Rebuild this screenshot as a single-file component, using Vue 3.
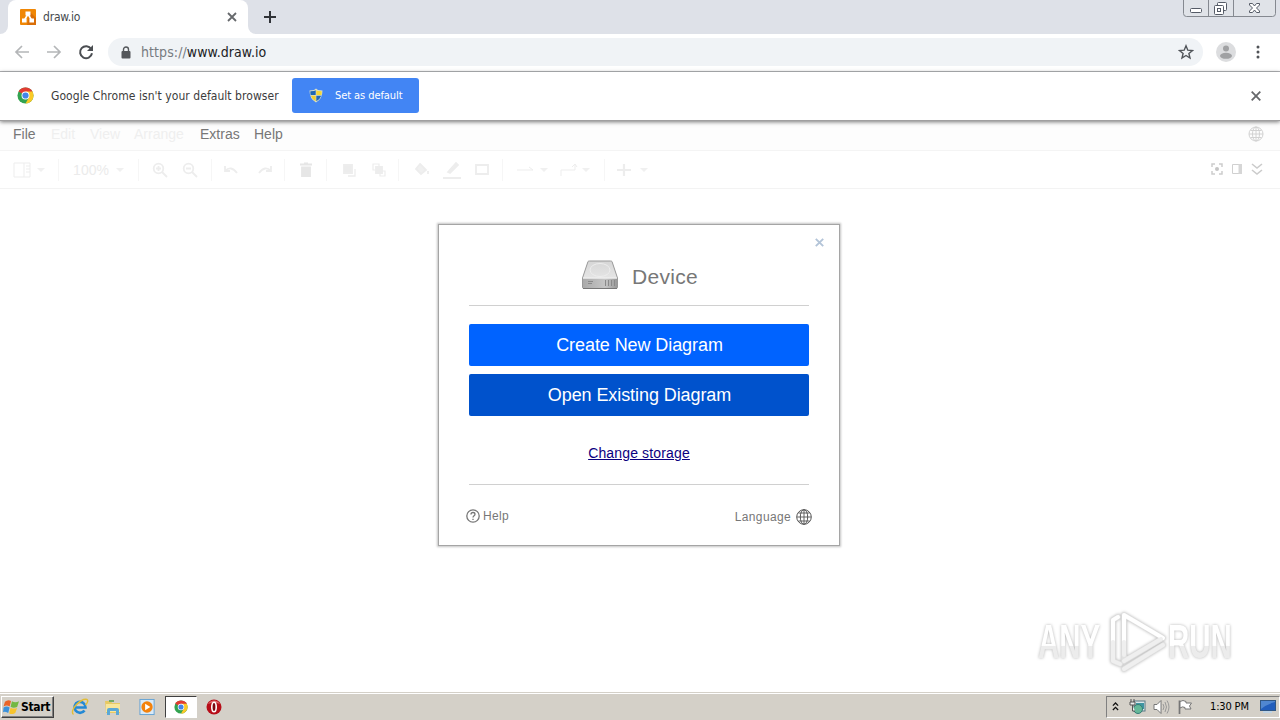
<script setup>
const raw = [
  ['panel', 22, 20], ['caret', 41, 8], ['sep', 58, 2], ['zoomtext', 91, 38], ['caret', 120, 8], ['sep', 138, 2],
  ['zin', 160, 18], ['zout', 190, 18], ['sep', 211, 2], ['undo', 231, 18], ['redo', 265, 18], ['sep', 284, 2],
  ['trash', 306, 18], ['sep', 326, 2], ['front', 349, 18], ['back', 379, 18], ['sep', 398, 2],
  ['fill', 422, 18], ['pen', 452, 20], ['shape', 482, 18], ['sep', 502, 2],
  ['conn', 525, 18], ['caret', 544, 8], ['way', 569, 18], ['caret', 586, 8], ['sep', 604, 2], ['plus', 624, 18], ['caret', 644, 8]
]
let end = 0
const tools = raw.map(([kind, center, w]) => {
  const start = center - w / 2
  const item = { kind, style: { width: w + 'px', marginLeft: start - end + 'px' } }
  end = start + w
  return item
})
</script>

<template>
  <div class="screen">
    <header class="tabs">
      <div class="edge"></div>
      <div class="tab">
        <svg class="fav" viewBox="0 0 16 16"><rect width="16" height="16" rx="1" fill="#f08705" /><path d="M10 3L16 9V16H7Z" fill="#d96e08" /><path d="M8 5L4.500 11M8 5L11.500 11" stroke="#fff" stroke-width="1.600" /><path d="M5.500 2.500h5v4h-5zM2 9.500h4.600v4H2zM9.400 9.500H14v4H9.400z" fill="#fff" /></svg>
        <span class="tabtitle">draw.io</span>
        <svg class="tabx" viewBox="0 0 10 10"><path d="M1 1L9 9M9 1L1 9" stroke="#66696c" stroke-width="1.800" /></svg>
      </div>
      <div class="edge right"></div>
      <svg class="newtab" viewBox="0 0 14 14"><path d="M7 1V13M1 7H13" stroke="#303338" stroke-width="2" /></svg>
      <svg class="winctl" viewBox="0 0 94 18" fill="none" stroke="#858990">
        <path d="M.5 0V13.500Q.5 16.500 3.500 16.500H89.500Q92.500 16.500 92.500 13.500V0" fill="#e0e3e8" /><path d="M25.500 0V16M50.500 0V16" />
        <g stroke="#555b66" fill="#fff"><rect x="7.500" y="8.500" width="11" height="4" rx="1" /><rect x="34.500" y="2.500" width="9" height="8" rx="1" /><rect x="31.500" y="5.500" width="9" height="9" rx="1" /><rect x="34.500" y="8.500" width="3" height="3" /><path d="M66.500 3.500h3l2 2.500 2-2.500h3v1.500L73.500 8l3 3v1.500h-3l-2-2.500-2 2.500h-3V11l3-3-3-3z" /></g>
      </svg>
    </header>

    <div class="nav">
      <svg class="n1" viewBox="0 0 16 16" fill="none" stroke="#b4b6b8" stroke-width="1.700"><path d="M15 8H2M8 2L2 8L8 14" /></svg>
      <svg class="n2" viewBox="0 0 16 16" fill="none" stroke="#b4b6b8" stroke-width="1.700"><path d="M1 8H14M8 2L14 8L8 14" /></svg>
      <svg class="n3" viewBox="0 0 16 16"><path d="M13.200 5A6 6 0 1 0 14 9.300" fill="none" stroke="#4b4e52" stroke-width="2" /><path d="M15 1V7H9Z" fill="#4b4e52" /></svg>
      <div class="omni">
        <svg class="lock" viewBox="0 0 10 13"><path d="M2.500 6V3.500a2.500 2.500 0 0 1 5 0V6" fill="none" stroke="#54575b" stroke-width="1.400" /><rect x=".5" y="5" width="9" height="7.500" rx="1" fill="#54575b" /></svg>
        <span class="url"><i>https://</i>www.draw.io</span>
        <svg class="star" viewBox="0 0 16 16"><path d="M8 1.800L9.800 6.200L14.500 6.500L10.900 9.500L12 14L8 11.500L4 14L5.100 9.500L1.500 6.500L6.200 6.200Z" fill="none" stroke="#505459" stroke-width="1.400" /></svg>
      </div>
      <svg class="avatar" viewBox="0 0 20 20"><circle cx="10" cy="10" r="10" fill="#dcdddf" /><circle cx="10" cy="6.500" r="3" fill="#a0a1a3" /><ellipse cx="10" cy="13.800" rx="6" ry="3" fill="#a0a1a3" /></svg>
      <svg class="dots" viewBox="0 0 4 14" fill="#505357"><circle cx="2" cy="2" r="1.500" /><circle cx="2" cy="7" r="1.500" /><circle cx="2" cy="12" r="1.500" /></svg>
    </div>

    <div class="infobar">
      <svg class="chrome" viewBox="0 0 18 18"><circle cx="9" cy="9" r="8.500" fill="#32a350" /><path d="M9 9L1.640 4.750A8.500 8.500 0 0 1 16.360 4.750Z" fill="#e23b32" /><path d="M9 4.750H16.360A8.500 8.500 0 0 1 9 17.500L12.700 11Z" fill="#fbc926" /><circle cx="9" cy="9" r="4.200" fill="#fff" /><circle cx="9" cy="9" r="3.300" fill="#4285e8" /></svg>
      <span class="infotext">Google Chrome isn't your default browser</span>
      <button class="default">
        <svg class="shield" viewBox="0 0 14 15"><path d="M7 .5L9 2L13.500 2.500Q13.500 11 7 14.500Q.5 11 .5 2.500L5 2Z" fill="#d8dfc8" /><path d="M6.700 2.200V7H1.600Q1.200 5 1.400 3.300L5 3Z" fill="#1e67b5" /><path d="M7.300 2.200L9 3L12.600 3.300Q12.800 5 12.400 7H7.300Z" fill="#f4d736" /><path d="M1.800 7.700H6.700V13.300Q3 11.300 1.800 7.700Z" fill="#f0cf2e" /><path d="M7.300 7.700H12.200Q11 11.300 7.300 13.300Z" fill="#2368b4" /></svg>
        <span>Set as default</span>
      </button>
      <svg class="infox" viewBox="0 0 10 10"><path d="M.7.7L9.300 9.300M9.300.7L.7 9.300" stroke="#66686b" stroke-width="1.800" /></svg>
    </div>

    <main class="page">
      <div class="menu">
        <span class="m1">File</span><span class="m2 off">Edit</span><span class="m3 off">View</span><span class="m4 off">Arrange</span><span class="m5">Extras</span><span class="m6">Help</span>
        <svg class="menuglobe" viewBox="0 0 16 16" fill="none" stroke="#d2d2d2"><circle cx="8" cy="8" r="7" /><ellipse cx="8" cy="8" rx="3.500" ry="7" /><path d="M8 1V15M1 8H15M2.500 4.500H13.500M2.500 11.500H13.500" /></svg>
      </div>
      <div class="tools">
        <div v-for="(t, i) in tools" :key="i" class="tool" :class="t.kind" :style="t.style">
          <span v-if="t.kind === 'zoomtext'">100%</span>
          <i v-else-if="t.kind === 'sep'"></i>
          <svg v-else-if="t.kind === 'caret'" width="8" height="4" viewBox="0 0 8 4"><path d="M0 0H8L4 4Z" fill="#f0f0f0" /></svg>
          <svg v-else width="18" height="18" viewBox="0 0 18 18" fill="none" stroke="#ededed" stroke-width="1.800">
            <path v-if="t.kind === 'panel'" d="M1 2H17V16H1ZM11 2V16M13 5H17M13 8H17M13 11H17" stroke-width="1" />
            <g v-if="t.kind === 'zin' || t.kind === 'zout'"><circle cx="7.500" cy="7.500" r="4.800" /><path d="M11 11L16 16M5 7.500H10" /><path v-if="t.kind === 'zin'" d="M7.500 5V10" /></g>
            <path v-if="t.kind === 'undo'" d="M3 5V10H8M3 10Q9 4 15 12" />
            <path v-if="t.kind === 'redo'" d="M15 5V10H10M15 10Q9 4 3 12" />
            <g v-if="t.kind === 'trash'" stroke="#e6e6e6"><path d="M5 6.500H13V15H5Z" fill="#e6e6e6" /><path d="M3 3.500H15M7 2.500H11" /></g>
            <g v-if="t.kind === 'front'"><path d="M4 4H12V12H4Z" fill="#ececec" /><path d="M15 8V15H8" stroke-width="1.300" /></g>
            <g v-if="t.kind === 'back'"><path d="M3 3H9V9H3ZM10 10H15V15H10Z" stroke-width="1.200" /><path d="M6 6H12V12H6Z" fill="#ededed" /></g>
            <path v-if="t.kind === 'fill'" d="M7 3L13 9L8 13L3 8ZM15 10V13" fill="#f0f0f0" />
            <path v-if="t.kind === 'pen'" d="M5 11L13 2L15 4L7 12ZM0 17H18" fill="#ededed" />
            <path v-if="t.kind === 'shape'" d="M3 4H15V13H3Z" />
            <path v-if="t.kind === 'conn'" d="M1 9H17M13 6L17 9" stroke-width="1" />
            <path v-if="t.kind === 'way'" d="M1 15V9H15V4M12 6L15 3L17 6" stroke-width="1" />
            <path v-if="t.kind === 'plus'" d="M9 3V15M2 9H16" stroke-width="2.200" />
          </svg>
        </div>
        <div class="views">
          <svg viewBox="0 0 14 14" fill="none" stroke="#cdcdcd" stroke-width="1.500"><path d="M2 5V2H5M9 2H12V5M12 9V12H9M5 12H2V9" /><circle cx="7" cy="7" r="2" fill="#c5c5c5" stroke="none" /></svg>
          <svg viewBox="0 0 14 14"><path d="M2.500 2.500H11.500V11.500H2.500Z" fill="none" stroke="#d0d0d0" /><path d="M8.500 2H12V12H8.500Z" fill="#d6d6d6" /></svg>
          <svg viewBox="0 0 14 14" fill="none" stroke="#cbcbcb" stroke-width="1.600"><path d="M2 2L7 6L12 2M2 8L7 12L12 8" /></svg>
        </div>
      </div>

      <section class="dialog">
        <svg class="close" viewBox="0 0 9 9"><path d="M.8.8L8.200 8.200M8.200.8L.8 8.200" stroke="#b3c4d8" stroke-width="1.900" /></svg>
        <div class="title">
          <svg class="drive" viewBox="0 0 38 30">
            <defs><linearGradient id="top" x2="0" y2="1"><stop stop-color="#d6d6d6" /><stop offset="1" stop-color="#eee" /></linearGradient><linearGradient id="front"><stop stop-color="#aaa" /><stop offset=".65" stop-color="#c5c5c5" /><stop offset="1" stop-color="#999" /></linearGradient></defs>
            <path d="M7 1.500Q7.500 1 8.500 1H29.500Q30.500 1 31 1.500L36.500 18V27Q36.500 28.500 35 28.500H3Q1.500 28.500 1.500 27V18Z" fill="url(#top)" stroke="#999" /><path d="M2 18.500H36V28H2Z" fill="url(#front)" /><ellipse cx="19" cy="10" rx="10" ry="6.500" fill="none" stroke="#ededed" /><path d="M2 18H36" stroke="#f2f2f2" /><path d="M7 21.500H12M7 23.500H11" stroke="#8a8a8a" /><path d="M24.500 20V26M27.500 20V26M30.500 20V26M33.500 20V26" stroke="#8a8a8a" /><path d="M2 28.500H36" stroke="#777" />
          </svg>
          <span>Device</span>
        </div>
        <div class="line"></div>
        <button class="big create"><span>Create New Diagram</span></button>
        <button class="big open"><span>Open Existing Diagram</span></button>
        <a class="change">Change storage</a>
        <div class="line second"></div>
        <div class="foot">
          <div class="help"><svg viewBox="0 0 14 14" fill="none" stroke="#777" stroke-width="1.300"><circle cx="7" cy="7" r="6.200" /><path d="M5 5.500Q5 3.500 7 3.500T9 5.300Q9 6.200 7.800 7Q7 7.600 7 8.500M7 9.700V11" /></svg><span>Help</span></div>
          <div class="language"><span>Language</span><svg viewBox="0 0 16 16" fill="none" stroke="#555"><circle cx="8" cy="8" r="7.300" /><ellipse cx="8" cy="8" rx="3.700" ry="7.300" /><path d="M8 1V15M1 8H15M2.500 4H13.500M2.500 12H13.500" stroke-width=".9" /></svg></div>
        </div>
      </section>

      <svg class="watermark" viewBox="0 0 210 70">
        <defs><linearGradient id="wm" x2="0" y2="1"><stop offset=".58" stop-color="#fff" /><stop offset=".6" stop-color="#ececec" /></linearGradient></defs>
        <g class="brand">
          <text transform="translate(8 53) scale(1 1.6)">ANY</text><text transform="translate(138 53) scale(1 1.6)">RUN</text>
          <g fill="none" stroke-linejoin="round" stroke-linecap="round"><path d="M94 50V10L133 33L94 56ZM83 15V56L90 59M83 15L88 12M94 64L133 40" stroke="#e0e0e0" stroke-width="5.500" /><path d="M94 36V10L133 33M83 36V15L88 12" stroke="#fff" stroke-width="4" /><path d="M83 37V56L90 59M94 37V50M94 56L131 34M94 64L133 40" stroke="#efefef" stroke-width="4" /></g>
        </g>
      </svg>
    </main>

    <footer class="taskbar">
      <button class="start"><svg viewBox="0 0 18 16"><path d="M2 3Q5 0 8.500 2L7 8Q4 6 .5 8Z" fill="#e96428" /><path d="M9.500 2.500Q13 4.500 17 2.500L15 8.500Q11 10 8 8.300Z" fill="#73b843" /><path d="M.5 9Q4 7 7 9L5.500 15Q2 13 0 14Z" fill="#3a91db" /><path d="M8 9.300Q11 11 15 9.500L13 15Q10 17 6.500 15.500Z" fill="#f7c42e" /></svg><span>Start</span></button>
      <svg class="ie" viewBox="0 0 18 18" fill="none"><path d="M13.500 12.500A5.500 5.500 0 1 1 14.500 9.500H4.500" stroke="#2489d5" stroke-width="2.700" /><path d="M2.500 16.500Q-.5 14 5 7Q12 0 16 1.500Q18 3 14.500 7" stroke="#e2bd36" stroke-width="1.400" /></svg>
      <svg class="folder" viewBox="0 0 18 18"><path d="M1 3H7L8 5H16V15H2Z" fill="#e7c963" /><path d="M2 6H16V14H2Z" fill="#f8e69a" /><path d="M3 17V12Q3 10 5 10H13Q15 10 15 12V17H12V13H6V17Z" fill="#5ba8d5" /><path d="M5 3H10" stroke="#74aa63" stroke-width="2" /></svg>
      <svg class="media" viewBox="0 0 18 18"><rect x="1" y="1" width="15" height="16" fill="#d9eaf8" stroke="#63a2d4" /><circle cx="8.500" cy="9" r="6" fill="#f3820d" /><path d="M6.500 5.500L12 9L6.500 12.500Z" fill="#fff" /></svg>
      <div class="active"><svg class="chrome" viewBox="0 0 18 18"><circle cx="9" cy="9" r="8.500" fill="#32a350" /><path d="M9 9L1.640 4.750A8.500 8.500 0 0 1 16.360 4.750Z" fill="#e23b32" /><path d="M9 4.750H16.360A8.500 8.500 0 0 1 9 17.500L12.700 11Z" fill="#fbc926" /><circle cx="9" cy="9" r="4.200" fill="#fff" /><circle cx="9" cy="9" r="3.300" fill="#4285e8" /></svg></div>
      <svg class="opera" viewBox="0 0 16 16"><circle cx="8" cy="8" r="7.500" fill="#b70d18" /><path d="M2 5A7 7 0 0 1 14 5Q8 2 2 5Z" fill="#df6469" /><ellipse cx="8" cy="8" rx="2.200" ry="4.800" fill="#7c0710" stroke="#fff" stroke-width="1.600" /></svg>
      <div class="tray">
        <svg class="up" viewBox="0 0 8 10" fill="none" stroke="#111" stroke-width="1.500"><path d="M1 4L4 1L7 4M1 9L4 6L7 9" /></svg>
        <svg class="net" viewBox="0 0 17 17"><rect x="5" y="3" width="11" height="10" fill="#dce7e9" stroke="#5b7884" /><rect x="7" y="5" width="8" height="6" fill="#3f95a2" /><circle cx="9" cy="11" r="4.500" fill="#65b899" stroke="#357b76" /><path d="M2 1V4M5 1V4M1 4H6V7H1ZM3.500 7V13H6" fill="#eee" stroke="#555" /></svg>
        <svg class="sound" viewBox="0 0 17 16"><path d="M1 5.500H4L8 1.500V14.500L4 10.500H1Z" fill="#fff" stroke="#777" /><path d="M10 5Q12 8 10 11M12 3Q15 8 12 13M14 1.500Q18 8 14 14.500" fill="none" stroke="#999" /></svg>
        <svg class="flag" viewBox="0 0 16 16"><path d="M2.500 1.500V15" stroke="#777" stroke-width="1.700" /><path d="M3 2.500Q6 .5 9 2.500V4H14.500L12.500 7L14 10H8V8.500Q5.500 7 3 9Z" fill="#fff" stroke="#777" /></svg>
        <span class="clock">1:30 PM</span>
        <svg class="desktop" viewBox="0 0 16 15"><rect x=".5" y="1.500" width="15" height="10" fill="#225ebd" stroke="#315784" /><path d="M1 2H15V3Q7 5 1 10Z" fill="#5087d1" /><path d="M3 12H12V14H3Z" fill="#c0d4e5" /></svg>
      </div>
    </footer>
  </div>
</template>

<style>
body { margin: 0; overflow: hidden; }
</style>
<style scoped>
* { box-sizing: border-box; }
svg { display: block; flex: none; }
button { border: 0; padding: 0; margin: 0; font: inherit; }
span { white-space: nowrap; }
.screen { width: 1280px; height: 720px; display: flex; flex-direction: column; background: #fff; font-family: "Liberation Sans", Arial, sans-serif; overflow: hidden; }
.tabs { height: 34px; flex: none; background: #dee1e8; display: flex; align-items: stretch; }
.edge { width: 8px; background: #fff; }
.edge::before { content: ""; display: block; height: 34px; background: #dee1e8; border-bottom-right-radius: 8px; }
.edge.right::before { border-radius: 0 0 0 8px; }
.tab { width: 240px; background: #fff; border-radius: 8px 8px 0 0; display: flex; align-items: center; }
.fav { width: 16px; height: 16px; margin-left: 12px; }
.tabtitle { flex: none; font: 12px "DejaVu Sans Condensed", "DejaVu Sans", sans-serif; color: #45494d; letter-spacing: -.2px; margin-left: 7px; width: 150px; }
.tabx { width: 10px; height: 10px; margin-left: 34px; }
.newtab { width: 14px; height: 14px; margin: 10px 0 0 7px; }
.winctl { width: 94px; height: 18px; margin-left: auto; margin-right: 3px; }
.nav { height: 38px; flex: none; border-bottom: 1px solid #aeb0b3; display: flex; align-items: center; padding-bottom: 1px; }
.nav > svg { width: 16px; height: 16px; }
.n1 { margin-left: 14px; }
.n2, .n3 { margin-left: 16px; }
.omni { width: 1095px; height: 28px; margin-left: 14px; border-radius: 14px; background: #f0f3f6; display: flex; align-items: center; }
.lock { width: 10px; height: 13px; margin-left: 13px; }
.url { font: 14px "DejaVu Sans Condensed", "DejaVu Sans", sans-serif; letter-spacing: .08px; color: #202124; margin-left: 10px; }
.url i { font-style: normal; color: #777b80; }
.star { width: 16px; height: 16px; margin-left: auto; margin-right: 9px; }
.nav > .avatar { width: 20px; height: 20px; margin-left: 13px; }
.nav > .dots { width: 4px; height: 14px; margin-left: 20px; }
.infobar { height: 49px; flex: none; display: flex; align-items: center; border-bottom: 1px solid #a09fa0; position: relative; z-index: 1; box-shadow: 0 1px 4px #777; padding-bottom: 1px; background: #fff; }
.chrome { width: 17px; height: 17px; }
.infobar .chrome { margin-left: 17px; }
.infotext { font: 12px "DejaVu Sans Condensed", "DejaVu Sans", sans-serif; color: #3c3c3c; letter-spacing: .05px; margin-left: 17px; width: 229px; }
.default { width: 127px; height: 35px; border-radius: 3px; background: #4285f4; color: #fff; margin-left: 12px; display: flex; align-items: center; font: 11px "DejaVu Sans Condensed", "DejaVu Sans", sans-serif; letter-spacing: -.08px; }
.shield { width: 14px; height: 15px; margin-left: 17px; }
.default span { margin-left: 12px; }
.infox { width: 10px; height: 10px; margin-left: auto; margin-right: 19px; }
.page { height: 571px; flex: none; position: relative; }
.menu { height: 30px; border-bottom: 1px solid #f4f4f4; display: flex; align-items: center; font-size: 14px; color: #777; background: #fdfdfd; padding: 0 16px 4px 13px; }
.menu span { flex: none; }
.m1 { width: 38px; } .m2 { width: 39px; } .m3 { width: 44px; } .m4 { width: 66px; } .m5 { width: 54px; }
.menu .off { color: #efefef; }
.menuglobe { width: 16px; height: 16px; margin-left: auto; }
.tools { height: 38px; border-bottom: 1px solid #f3f3f3; display: flex; align-items: center; }
.tool { flex: none; display: flex; justify-content: center; }
.zoomtext { font-size: 14px; color: #ebebeb; }
.sep i { width: 1px; height: 22px; background: #f6f6f6; }
.views { display: flex; gap: 6px; margin-left: auto; margin-right: 16px; margin-bottom: 2px; }
.views svg { width: 14px; height: 14px; }
.dialog { position: absolute; left: 438px; top: 103px; width: 402px; height: 322px; background: #fff; border: 1px solid #a5a5a5; box-shadow: 0 0 2px 1px #c4c4c4; display: flex; flex-direction: column; padding: 0 30px; }
.close { position: absolute; width: 9px; height: 9px; right: 15px; top: 13px; }
.title { height: 80px; display: flex; padding: 35px 0 0 112px; color: #777; font-size: 21px; }
.drive { width: 38px; height: 30px; }
.title span { margin: 5px 0 0 13px; line-height: 24px; letter-spacing: .3px; }
.line { height: 1px; background: #d0d0d0; flex: none; }
.big { height: 42px; border-radius: 2px; color: #fff; font-size: 18px; flex: none; line-height: 42px; }
.big span { letter-spacing: -.08px; padding-left: 1px; }
.create { background: #0063ff; margin-top: 18px; }
.open { background: #0052cc; margin-top: 8px; }
.change { font-size: 14px; line-height: 18px; color: #0b0080; text-decoration: underline; align-self: center; margin-top: 28px; letter-spacing: .15px; }
.second { margin-top: 22px; }
.foot { display: flex; justify-content: space-between; align-items: flex-start; margin: 22px -3px 0; color: #777; font-size: 12px; }
.help, .language { display: flex; align-items: center; height: 18px; letter-spacing: .35px; }
.help svg { width: 14px; height: 14px; margin-right: 3px; }
.language { margin-top: 1px; }
.language svg { width: 16px; height: 16px; margin-left: 5px; }
.watermark { position: absolute; left: 1030px; top: 484px; width: 210px; height: 70px; }
.brand { filter: drop-shadow(0 0 1.500px #b5b5b5); }
.brand text { font: bold 29.500px "Liberation Sans", sans-serif; fill: url(#wm); }
.taskbar { height: 28px; flex: none; background: #d4d0c8; border-top: 1px solid #d4d0c8; box-shadow: inset 0 1px #fff; display: flex; align-items: center; padding-top: 1px; padding-bottom: 1px; }
.start { width: 53px; height: 22px; margin-left: 1px; border: 1px solid; border-color: #fff #404040 #404040 #fff; box-shadow: inset -1px -1px #808080; background: #d4d0c8; display: flex; align-items: center; font: bold 12px "DejaVu Sans Condensed", "DejaVu Sans", sans-serif; letter-spacing: -.3px; color: #000; }
.start svg { width: 17px; height: 15px; margin: 0 1px; }
.ie { width: 18px; height: 18px; margin-left: 17px; }
.folder { width: 18px; height: 18px; margin-left: 15px; }
.media { width: 17px; height: 18px; margin-left: 17px; }
.active { width: 32px; height: 22px; margin-left: 9px; background: #fff; border: 1px solid; border-color: #404040 #fff #fff #404040; display: grid; place-items: center; }
.active .chrome { width: 14px; height: 14px; }
.opera { width: 16px; height: 16px; margin-left: 9px; }
.tray { width: 174px; height: 22px; margin-left: auto; border: 1px solid; border-color: #808080 #fff #fff #808080; display: flex; align-items: center; }
.up { width: 7px; height: 9px; margin-left: 5px; }
.net { width: 17px; height: 17px; margin-left: 10px; }
.sound { width: 17px; height: 16px; margin-left: 7px; }
.flag { width: 16px; height: 16px; margin-left: 7px; }
.clock { font: 11px "DejaVu Sans Condensed", "DejaVu Sans", sans-serif; letter-spacing: -.15px; margin-left: 17px; width: 39px; }
.desktop { width: 16px; height: 15px; margin-left: 11px; }
</style>
